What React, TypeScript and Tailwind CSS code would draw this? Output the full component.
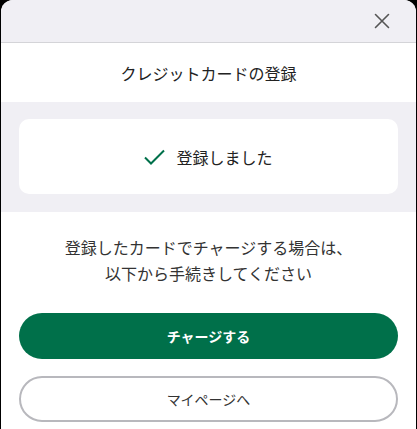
import React from "react";

export default function App() {
  return (
    <div
      className="w-[417px] h-[429px] bg-black overflow-hidden px-[1px]"
      style={{ fontFamily: '"Noto Sans CJK JP", "Noto Sans", sans-serif' }}
    >
      <div className="h-full bg-white rounded-t-[12px] overflow-hidden flex flex-col">
        <div className="h-[43px] shrink-0 bg-[#f0eff4] border-b border-[#d4d4d8] flex items-center justify-end pr-[26px]">
          <svg width="16" height="16" viewBox="0 0 16 16" fill="none">
            <path d="M1.5 1.5 L14.5 14.5 M14.5 1.5 L1.5 14.5" stroke="#555555" strokeWidth="1.6" strokeLinecap="round" />
          </svg>
        </div>
        <div className="h-[59px] shrink-0 flex items-center justify-center text-[16px] text-[#222222]">
          クレジットカードの登録
        </div>
        <div className="bg-[#f0eff4] px-[18px] pt-[17px] pb-[18px]">
          <div className="h-[75px] bg-white rounded-[10px] flex items-center justify-center gap-[11px]">
            <svg width="21" height="16" viewBox="0 0 21 16" fill="none">
              <path d="M1 8.5 L7 14.5 L20 1.5" stroke="#00704a" strokeWidth="2" />
            </svg>
            <span className="text-[16px] text-[#222222]">登録しました</span>
          </div>
        </div>
        <div className="pt-[22px] text-center text-[16px] leading-[26px] text-[#333333]">
          <p>登録したカードでチャージする場合は、</p>
          <p>以下から手続きしてください</p>
        </div>
        <div className="px-[18px] pt-[27px] flex flex-col gap-[17px]">
          <button className="h-[46px] w-full rounded-full bg-[#00704a] text-white text-[14px] font-bold">
            チャージする
          </button>
          <button className="h-[46px] w-full rounded-full border-2 border-[#b8b8bd] bg-white text-[#333333] text-[14px]">
            マイページへ
          </button>
        </div>
      </div>
    </div>
  );
}
